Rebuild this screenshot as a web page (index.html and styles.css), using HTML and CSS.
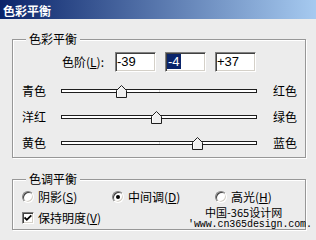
FILE: index.html
```html
<!DOCTYPE html>
<html lang="zh">
<head>
<meta charset="utf-8">
<title>色彩平衡</title>
<link rel="stylesheet" href="styles.css">
</head>
<body>
<div class="window">
  <div class="titlebar">色彩平衡</div>

  <fieldset class="group group-balance">
    <legend>色彩平衡</legend>
    <div class="levels">
      <span class="levels-label">色阶(<u>L</u>):</span>
      <div class="field">-39</div>
      <div class="field"><span class="sel">-4</span></div>
      <div class="field">+37</div>
    </div>
    <div class="sliders">
      <span class="lbl">青色</span>
      <div class="track"><span class="tick"></span><span class="thumb" style="left:54px"><svg width="11" height="13" viewBox="0 0 11 13"><path d="M0.5 12.5V5.5L5.5 0.5L10.5 5.5V12.5Z" fill="#efefef" stroke="#1e1e1e"/><path d="M1.5 11.5V5.9L5.5 1.9" fill="none" stroke="#fff"/></svg></span></div>
      <span class="lbl-r">红色</span>

      <span class="lbl">洋红</span>
      <div class="track"><span class="tick"></span><span class="thumb" style="left:89px"><svg width="11" height="13" viewBox="0 0 11 13"><path d="M0.5 12.5V5.5L5.5 0.5L10.5 5.5V12.5Z" fill="#efefef" stroke="#1e1e1e"/><path d="M1.5 11.5V5.9L5.5 1.9" fill="none" stroke="#fff"/></svg></span></div>
      <span class="lbl-r">绿色</span>

      <span class="lbl">黄色</span>
      <div class="track"><span class="tick"></span><span class="thumb" style="left:130px"><svg width="11" height="13" viewBox="0 0 11 13"><path d="M0.5 12.5V5.5L5.5 0.5L10.5 5.5V12.5Z" fill="#efefef" stroke="#1e1e1e"/><path d="M1.5 11.5V5.9L5.5 1.9" fill="none" stroke="#fff"/></svg></span></div>
      <span class="lbl-r">蓝色</span>
    </div>
  </fieldset>

  <fieldset class="group group-tone">
    <legend>色调平衡</legend>
    <div class="tones">
      <div class="opt"><span class="radio"></span><span>阴影(<u>S</u>)</span></div>
      <div class="opt"><span class="radio checked"></span><span>中间调(<u>D</u>)</span></div>
      <div class="opt"><span class="radio"></span><span>高光(<u>H</u>)</span></div>
    </div>
    <div class="opt check-row"><span class="checkbox"><svg width="8" height="8" viewBox="0 0 8 8"><path d="M0.5 3.5L2.8 5.8L7.3 1.3" fill="none" stroke="#000" stroke-width="1.8"/></svg></span><span>保持明度(<u>V</u>)</span></div>
  </fieldset>

  <div class="watermark">
    <div class="wm-cn">中国-365设计网</div>
    <div class="wm-url">'www.cn365design.com.</div>
  </div>
</div>
</body>
</html>
```

FILE: styles.css
```css
html, body {
  margin: 0;
  padding: 0;
}

body {
  width: 316px;
  height: 240px;
  overflow: hidden;
  background: #ececec;
  font-family: "Noto Sans CJK SC", "Noto Sans", sans-serif;
  font-size: 12px;
  line-height: 14px;
  color: #000;
}

.window {
  position: relative;
  width: 316px;
  height: 240px;
  overflow: hidden;
}

.titlebar {
  box-sizing: border-box;
  height: 19px;
  padding: 2px 0 0 3px;
  line-height: 17px;
  font-weight: bold;
  color: #fff;
  background: linear-gradient(to right, #0a246a, #a6caf0);
}

.group {
  margin: 0 10px 0 12px;
  padding: 0 0 1px 9px;
  border: 1px solid #979797;
  box-shadow: 1px 1px 0 #fff, inset 1px 1px 0 #fff;
  min-width: 0;
}

.group legend {
  margin-left: 4px;
  padding: 0 3px;
  line-height: 14px;
  background: #ececec;
}

.group-balance {
  margin-top: 13px;
}

.levels {
  display: flex;
  align-items: center;
  height: 20px;
  margin-top: 6px;
  gap: 9px;
}

.levels-label {
  margin-left: 40px;
  width: 44px;
  white-space: nowrap;
}

.field {
  box-sizing: border-box;
  width: 41px;
  height: 20px;
  padding-left: 1px;
  background: #fff;
  border: 1px solid;
  border-color: #808080 #fff #fff #808080;
  box-shadow: inset 1px 1px 0 #404040, inset -1px -1px 0 #d4d0c8;
  font-family: "Liberation Sans", Arial, sans-serif;
  font-size: 13px;
  line-height: 18px;
}

.sel {
  background: #0a246a;
  color: #fff;
  padding: 0 1px;
}

.sliders {
  display: grid;
  grid-template-columns: 39px 196px auto;
  grid-auto-rows: 26px;
  align-items: center;
  margin-top: 6px;
}

.lbl,
.lbl-r {
  white-space: nowrap;
}

.lbl-r {
  padding-left: 16px;
}

.track {
  position: relative;
  box-sizing: border-box;
  height: 4px;
  background: #fff;
  border: 1px solid #1e1e1e;
}

.tick {
  position: absolute;
  left: 97px;
  top: 0;
  width: 1px;
  height: 2px;
  background: #d8d8d8;
}

.thumb {
  position: absolute;
  top: -5px;
  width: 11px;
  height: 13px;
  display: block;
}

.thumb svg {
  display: block;
}

.group-tone {
  margin-top: 14px;
  padding-bottom: 4px;
}

.tones {
  display: grid;
  grid-template-columns: 90px 103px auto;
  margin-top: 4px;
}

.opt {
  display: flex;
  align-items: center;
  gap: 4px;
  height: 14px;
  white-space: nowrap;
}

.check-row {
  margin-top: 7px;
}

.radio {
  position: relative;
  box-sizing: border-box;
  width: 12px;
  height: 12px;
  border-radius: 50%;
  background: #fff;
  border: 1px solid;
  border-color: #808080 #fff #fff #808080;
  box-shadow: inset 1px 1px 0 #404040, inset -1px -1px 0 #d4d0c8;
}

.radio.checked::after {
  content: "";
  position: absolute;
  left: 3px;
  top: 3px;
  width: 4px;
  height: 4px;
  border-radius: 50%;
  background: #000;
}

.checkbox {
  box-sizing: border-box;
  width: 12px;
  height: 12px;
  display: flex;
  align-items: center;
  justify-content: center;
  background: #fff;
  border: 1px solid;
  border-color: #808080 #fff #fff #808080;
  box-shadow: inset 1px 1px 0 #404040, inset -1px -1px 0 #d4d0c8;
}

.checkbox svg {
  display: block;
}

.watermark {
  position: absolute;
  left: 188px;
  top: 206px;
  width: 122px;
}

.wm-cn {
  margin-left: 17px;
  font-size: 11px;
  line-height: 13px;
}

.wm-url {
  font-family: "Liberation Mono", monospace;
  font-size: 10px;
  line-height: 11px;
  letter-spacing: -0.1px;
}
```
